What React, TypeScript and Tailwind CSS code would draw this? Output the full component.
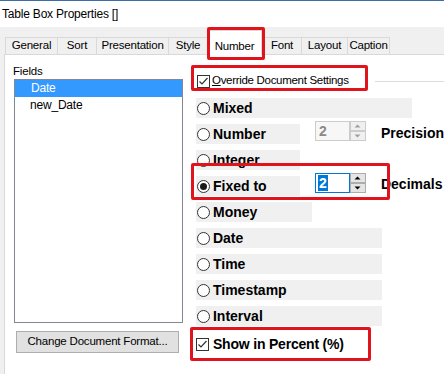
import React from "react";

const tabs = [
  { label: "General", w: "w-[52px]" },
  { label: "Sort", w: "w-[39px]" },
  { label: "Presentation", w: "w-[72px]" },
  { label: "Style", w: "w-[39px]" },
  { label: "Number", w: "w-[55px]", active: true },
  { label: "Font", w: "w-[39px]" },
  { label: "Layout", w: "w-[46px]" },
  { label: "Caption", w: "w-[43px]", last: true },
];

function Radio({ checked }: { checked?: boolean }) {
  return (
    <span className="w-[13px] h-[13px] rounded-full border border-[#333333] bg-white flex items-center justify-center shrink-0">
      {checked && <span className="w-[7px] h-[7px] rounded-full bg-[#1a1a1a]" />}
    </span>
  );
}

function Check() {
  return (
    <span className="w-[13px] h-[13px] border border-[#333333] bg-white flex items-center justify-center shrink-0">
      <svg width="11" height="11" viewBox="0 0 11 11">
        <polyline points="1.5,5.5 4,8 9.5,2" fill="none" stroke="#333" strokeWidth="1.2" />
      </svg>
    </span>
  );
}

function Arrow({ up, color }: { up?: boolean; color: string }) {
  return (
    <svg width="7" height="4" viewBox="0 0 7 4">
      <polygon points={up ? "0.5,3.5 3.5,0.5 6.5,3.5" : "0.5,0.5 3.5,3.5 6.5,0.5"} fill={color} />
    </svg>
  );
}

function Spin({ enabled }: { enabled?: boolean }) {
  return (
    <div className="flex h-[20px] mb-[7px] ml-[15px]">
      <div
        className={
          enabled
            ? "w-[35px] h-full border border-[#0078d7] bg-white flex items-center pl-[2px]"
            : "w-[35px] h-full border border-[#cccccc] bg-[#f7f7f7] flex items-center pl-[3px]"
        }
      >
        {enabled ? (
          <span className="bg-[#0078d7] text-white text-[14px] leading-[16px] px-px">2</span>
        ) : (
          <span className="text-[#8a8a8a] text-[14px] leading-[16px]">2</span>
        )}
      </div>
      <div className="w-[16px] h-full flex flex-col">
        {[true, false].map((up) => (
          <div
            key={String(up)}
            className={
              enabled
                ? "flex-1 border border-[#adadad] bg-[#e5e5e5] flex items-center justify-center"
                : "flex-1 border border-[#cccccc] bg-[#f0f0f0] flex items-center justify-center"
            }
          >
            <Arrow up={up} color={enabled ? "#000" : "#a0a0a0"} />
          </div>
        ))}
      </div>
    </div>
  );
}

const options = [
  { label: "Mixed", w: "w-[216px]" },
  { label: "Number", w: "w-[104px]", spin: "Precision" },
  { label: "Integer", w: "w-[104px]" },
  { label: "Fixed to", w: "w-[104px]", spin: "Decimals", checked: true },
  { label: "Money", w: "w-[116px]" },
  { label: "Date", w: "w-[186px]" },
  { label: "Time", w: "w-[186px]" },
  { label: "Timestamp", w: "w-[186px]" },
  { label: "Interval", w: "w-[186px]" },
];

export default function App() {
  return (
    <div className="relative w-[444px] h-[374px] overflow-hidden bg-[#f0f0f0] font-['Liberation_Sans',Arial,sans-serif] text-black">
      {/* Title */}
      <div className="h-px bg-[#3b6ea5]" />
      <div className="h-[26px] bg-white pl-[2px] flex items-center text-[12px] tracking-[-0.2px]">
        Table Box Properties []
      </div>

      {/* Tabs */}
      <div className="mt-[3px] h-[24px] pl-[5px] flex items-end text-[11.5px] tracking-[-0.2px]">
        {tabs.map((t) =>
          t.active ? (
            <div
              key={t.label}
              className={`${t.w} h-[25px] -mb-px relative z-10 bg-white border-t border-x border-[#d9d9d9] flex justify-center pt-[7px]`}
            >
              {t.label}
            </div>
          ) : (
            <div
              key={t.label}
              className={`${t.w} h-[17px] border-t border-l border-[#d9d9d9] ${t.last ? "border-r" : ""} flex items-center justify-center`}
            >
              {t.label}
            </div>
          )
        )}
      </div>

      {/* Panel */}
      <div className="ml-[4px] h-[320px] border-t border-l border-[#d9d9d9] bg-white flex">
        <div className="w-[193px] pl-[8px] pt-[8px] flex flex-col text-[11.5px] tracking-[-0.2px]">
          <div className="h-[16px] leading-[16px]">Fields</div>
          <div className="ml-px w-[169px] h-[244px] border border-[#828790] bg-white">
            <div className="h-[17px] bg-[#3399ff] text-white pl-[16px] leading-[17px] text-[12px]">Date</div>
            <div className="h-[16px] pl-[15px] leading-[16px] text-[12px]">new_Date</div>
          </div>
          <div className="mt-[8px] ml-[3px] w-[163px] h-[22px] border border-[#adadad] bg-[#e1e1e1] flex items-center justify-center">
            Change Document Format...
          </div>
        </div>

        <div className="flex-1 flex flex-col">
          <div className="mt-[18px] h-[16px] flex items-center">
            <span className="ml-[1px]">
              <Check />
            </span>
            <span className="ml-[2px] text-[11.5px] tracking-[-0.3px]">
              <span className="underline">O</span>verride Document Settings
            </span>
            <div className="flex-1 h-px bg-[#dcdcdc] ml-[26px]" />
          </div>

          <div className="mt-[9px] flex flex-col gap-[6px] text-[14px] font-bold">
            {options.map((o) => (
              <div key={o.label} className="h-[20px] flex items-center">
                <div className={`${o.w} h-[20px] bg-[#f0f0f0] flex items-center pl-px gap-[3px]`}>
                  <Radio checked={o.checked} />
                  <span>{o.label}</span>
                </div>
                {o.spin && (
                  <>
                    <Spin enabled={o.checked} />
                    <span className={`ml-[15px] whitespace-nowrap ${o.checked ? "mb-[3px]" : "mb-[2px]"}`}>{o.spin}</span>
                  </>
                )}
              </div>
            ))}
          </div>

          <div className="mt-[10px] h-[16px] flex items-center gap-[4px] text-[14px] font-bold tracking-[-0.2px]">
            <Check />
            <span>Show in Percent (%)</span>
          </div>
        </div>
      </div>

      {/* Annotation boxes */}
      <div className="absolute left-[207px] top-[27px] w-[58px] h-[33px] border-[3px] border-[#e0141c] rounded-[2px] z-20" />
      <div className="absolute left-[191px] top-[65px] w-[177px] h-[26px] border-[3px] border-[#e0141c] rounded-[2px] z-20" />
      <div className="absolute left-[191px] top-[163px] w-[199px] h-[37px] border-[3px] border-[#e0141c] rounded-[2px] z-20" />
      <div className="absolute left-[190px] top-[327px] w-[181px] h-[34px] border-[3px] border-[#e0141c] rounded-[2px] z-20" />
    </div>
  );
}
